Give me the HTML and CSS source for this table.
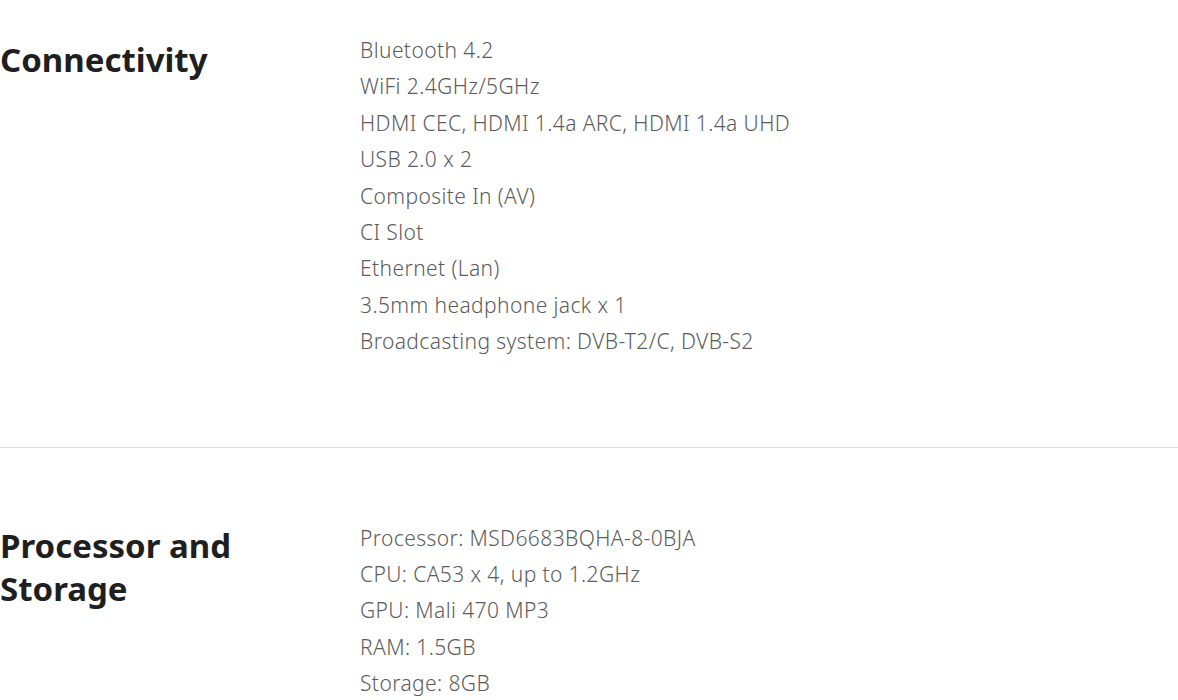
FILE: index.html
```html
<!DOCTYPE html>
<html lang="en">
<head>
<meta charset="utf-8">
<title>Specs</title>
<link rel="stylesheet" href="styles.css">
</head>
<body>
<section class="spec spec-first">
  <h2 class="spec-title">Connectivity</h2>
  <ul class="spec-list">
    <li>Bluetooth 4.2</li>
    <li>WiFi 2.4GHz/5GHz</li>
    <li>HDMI CEC, HDMI 1.4a ARC, HDMI 1.4a UHD</li>
    <li>USB 2.0 x 2</li>
    <li>Composite In (AV)</li>
    <li>CI Slot</li>
    <li>Ethernet (Lan)</li>
    <li>3.5mm headphone jack x 1</li>
    <li>Broadcasting system: DVB-T2/C, DVB-S2</li>
  </ul>
</section>
<section class="spec spec-second">
  <h2 class="spec-title">Processor and<br>Storage</h2>
  <ul class="spec-list">
    <li>Processor: MSD6683BQHA-8-0BJA</li>
    <li>CPU: CA53 x 4, up to 1.2GHz</li>
    <li>GPU: Mali 470 MP3</li>
    <li>RAM: 1.5GB</li>
    <li>Storage: 8GB</li>
  </ul>
</section>
</body>
</html>
```
FILE: styles.css
```css
html, body {
  margin: 0;
  padding: 0;
  background: #ffffff;
}
body {
  font-family: "Noto Sans", "Open Sans", sans-serif;
  width: 1178px;
  height: 700px;
  overflow: hidden;
}
.spec {
  display: flex;
  align-items: flex-start;
}
.spec-first {
  padding: 32px 0 87px;
  border-bottom: 1px solid #e0e0e0;
}
.spec-second {
  padding: 72px 0 0;
}
.spec-title {
  width: 360px;
  flex: none;
  margin: 6px 0 0;
  font-size: 33px;
  line-height: 43px;
  font-weight: 700;
  color: #1f1f1f;
}
.spec-second .spec-title {
  margin-top: 4px;
}
.spec-list {
  list-style: none;
  margin: 0;
  padding: 0;
  font-size: 21px;
  font-weight: 300;
  letter-spacing: 0.4px;
  line-height: 36.4px;
  color: #5c5c5c;
}
```
